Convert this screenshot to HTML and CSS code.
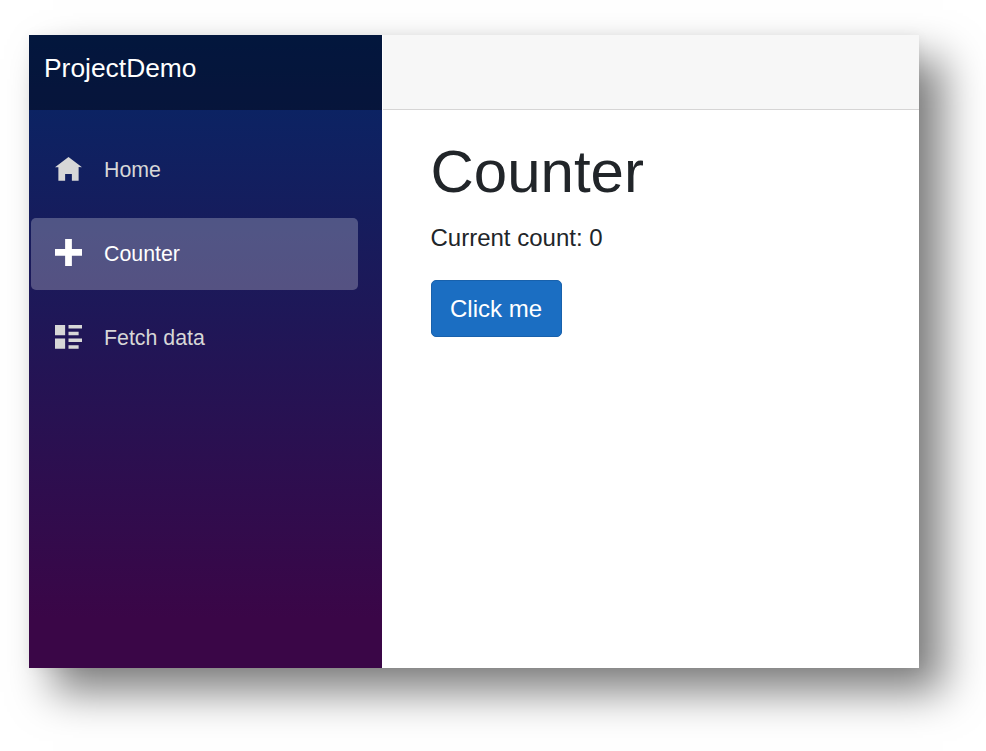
FILE: index.html
```html
<!DOCTYPE html>
<html lang="en">
<head>
<meta charset="utf-8">
<title>Counter</title>
<link rel="stylesheet" href="styles.css">
</head>
<body>
<div class="app">
  <aside class="sidebar">
    <div class="brand-row"><a class="brand">ProjectDemo</a></div>
    <nav class="nav">
      <a class="nav-link">
        <svg class="icon" viewBox="0 0 8 8"><path d="M4 0l-4 3h1v4h2v-2h2v2h2v-4.03l1 .03-4-3z"/></svg>
        <span>Home</span>
      </a>
      <a class="nav-link active">
        <svg class="icon" viewBox="0 .6 8 8"><path d="M3 0v3h-3v2h3v3h2v-3h3v-2h-3v-3h-2z"/></svg>
        <span>Counter</span>
      </a>
      <a class="nav-link">
        <svg class="icon" viewBox="0 0 8 8"><path d="M0 0v3h3v-3h-3zm4 0v1h4v-1h-4zm0 2v1h3v-1h-3zm-4 2v3h3v-3h-3zm4 0v1h4v-1h-4zm0 2v1h3v-1h-3z"/></svg>
        <span>Fetch data</span>
      </a>
    </nav>
  </aside>
  <main class="main">
    <div class="top-row"></div>
    <div class="content">
      <h1 class="title">Counter</h1>
      <p class="count">Current count: 0</p>
      <button class="btn" type="button">Click me</button>
    </div>
  </main>
</div>
</body>
</html>
```

FILE: styles.css
```css
html, body {
  margin: 0;
  padding: 0;
  background: #fff;
}
body {
  box-sizing: border-box;
  min-height: 751px;
  padding: 35px 0 83px 29px;
  font-family: "Liberation Sans", Arial, sans-serif;
  font-size: 21.33px;
  color: #212529;
}
.app {
  display: flex;
  width: 890px;
  height: 633px;
  background: #fff;
  box-shadow: 0 0 12px rgba(0, 0, 0, 0.05), 24px 24px 40px rgba(0, 0, 0, 0.5);
}
.sidebar {
  flex: 0 0 353px;
  display: flex;
  flex-direction: column;
  background-image: linear-gradient(180deg, #052767 0%, #3a0647 92%);
}
.brand-row {
  flex: 0 0 75px;
  box-sizing: border-box;
  display: flex;
  align-items: center;
  padding: 0 0 8px 15px;
  background: rgba(0, 0, 0, 0.4);
}
.brand {
  font-size: 26.4px;
  color: #fff;
}
.nav {
  display: flex;
  flex-direction: column;
  gap: 12px;
  padding: 24px 24px 0 2px;
}
.nav-link {
  display: flex;
  align-items: center;
  height: 72px;
  padding-left: 24px;
  border-radius: 5px;
  color: #d7d7d7;
}
.nav-link.active {
  background: rgba(255, 255, 255, 0.25);
  color: #fff;
}
.icon {
  flex: 0 0 27px;
  width: 27px;
  height: 27px;
  margin-right: 22px;
  fill: currentColor;
  overflow: visible;
}
.main {
  flex: 1;
  margin-left: 1px;
  display: flex;
  flex-direction: column;
  min-width: 0;
}
.top-row {
  flex: 0 0 74px;
  background: #f7f7f7;
  border-bottom: 1px solid #d6d5d5;
}
.content {
  padding: 26px 0 0 47.5px;
}
.title {
  margin: 0 0 12px;
  font-size: 60px;
  font-weight: 400;
  line-height: 72px;
}
.count {
  margin: 0 0 24px;
  font-size: 24px;
  line-height: 36px;
}
.btn {
  display: block;
  width: 131px;
  height: 57px;
  padding: 0;
  border: 1px solid #1861ac;
  border-radius: 5px;
  background: #1b6ec2;
  color: #fff;
  font: inherit;
  font-size: 24px;
}
```
